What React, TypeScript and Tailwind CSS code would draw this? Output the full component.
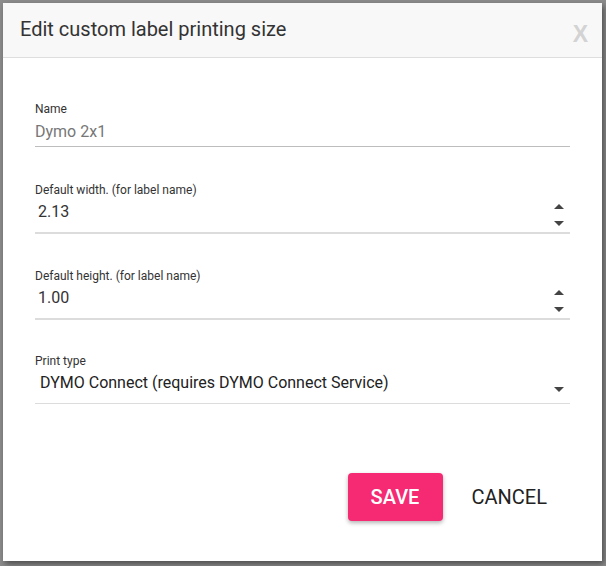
import React from 'react';

const Spinner = () => (
    <div className="flex flex-col items-center gap-[12px] pr-[6px] mt-[2px]">
        <svg width="10" height="5" viewBox="0 0 10 5"><path d="M5 0 L10 5 L0 5 Z" fill="#444" /></svg>
        <svg width="10" height="5" viewBox="0 0 10 5"><path d="M0 0 L10 0 L5 5 Z" fill="#444" /></svg>
    </div>
);

const App = () => {
    return (
        <div className="w-[606px] h-[566px] bg-[#8c8c8c] pt-[3px] pl-[3px]" style={{ fontFamily: 'Roboto, "Liberation Sans", sans-serif' }}>
            <div className="w-[599px] h-[558px] bg-white shadow-[2px_3px_6px_rgba(0,0,0,0.45)] flex flex-col">
                <div className="h-[55px] bg-[#f8f8f8] border-b border-[#dedede] flex items-center justify-between pl-[17px] pr-[14px]">
                    <h2 className="text-[20px] text-[#333] leading-none -mt-[2px]">Edit custom label printing size</h2>
                    <span className="text-[23px] font-bold text-[#d3d3d3] leading-none mt-[8px]" style={{ fontFamily: '"Liberation Sans", sans-serif' }}>X</span>
                </div>

                <div className="px-[32px] pt-[44px]">
                    <div>
                        <label className="block text-[12px] text-[#333] leading-[14px]">Name</label>
                        <div className="text-[16px] text-[#777] leading-[20px] mt-[6px] pb-[4px] border-b border-[#bdbdbd]">Dymo 2x1</div>
                    </div>

                    <div className="mt-[36px]">
                        <label className="block text-[12px] text-[#333] leading-[14px]">Default width. (for label name)</label>
                        <div className="flex items-start justify-between mt-[5px] h-[32px] border-b-2 border-[#dcdcdc] pl-[3px]">
                            <span className="text-[16px] text-[#333] leading-[20px]">2.13</span>
                            <Spinner />
                        </div>
                    </div>

                    <div className="mt-[35px]">
                        <label className="block text-[12px] text-[#333] leading-[14px]">Default height. (for label name)</label>
                        <div className="flex items-start justify-between mt-[5px] h-[32px] border-b-2 border-[#dcdcdc] pl-[3px]">
                            <span className="text-[16px] text-[#333] leading-[20px]">1.00</span>
                            <Spinner />
                        </div>
                    </div>

                    <div className="mt-[34px]">
                        <label className="block text-[12px] text-[#333] leading-[14px]">Print type</label>
                        <div className="flex items-start justify-between mt-[5px] h-[31px] border-b border-[#dcdcdc] pl-[5px]">
                            <span className="text-[16px] text-[#222] leading-[20px]">DYMO Connect (requires DYMO Connect Service)</span>
                            <div className="pr-[6px] mt-[14px]">
                                <svg width="10" height="5" viewBox="0 0 10 5" className="block"><path d="M0 0 L10 0 L5 5 Z" fill="#444" /></svg>
                            </div>
                        </div>
                    </div>
                </div>

                <div className="flex items-center justify-end gap-[29px] pr-[55px] mt-[69px]">
                    <button className="w-[95px] h-[48px] rounded-[4px] bg-[#f52a73] text-white text-[20px] font-medium shadow-[0_2px_4px_rgba(0,0,0,0.3)]">SAVE</button>
                    <button className="text-[20px] text-[#222]">CANCEL</button>
                </div>
            </div>
        </div>
    );
};

export default App;
